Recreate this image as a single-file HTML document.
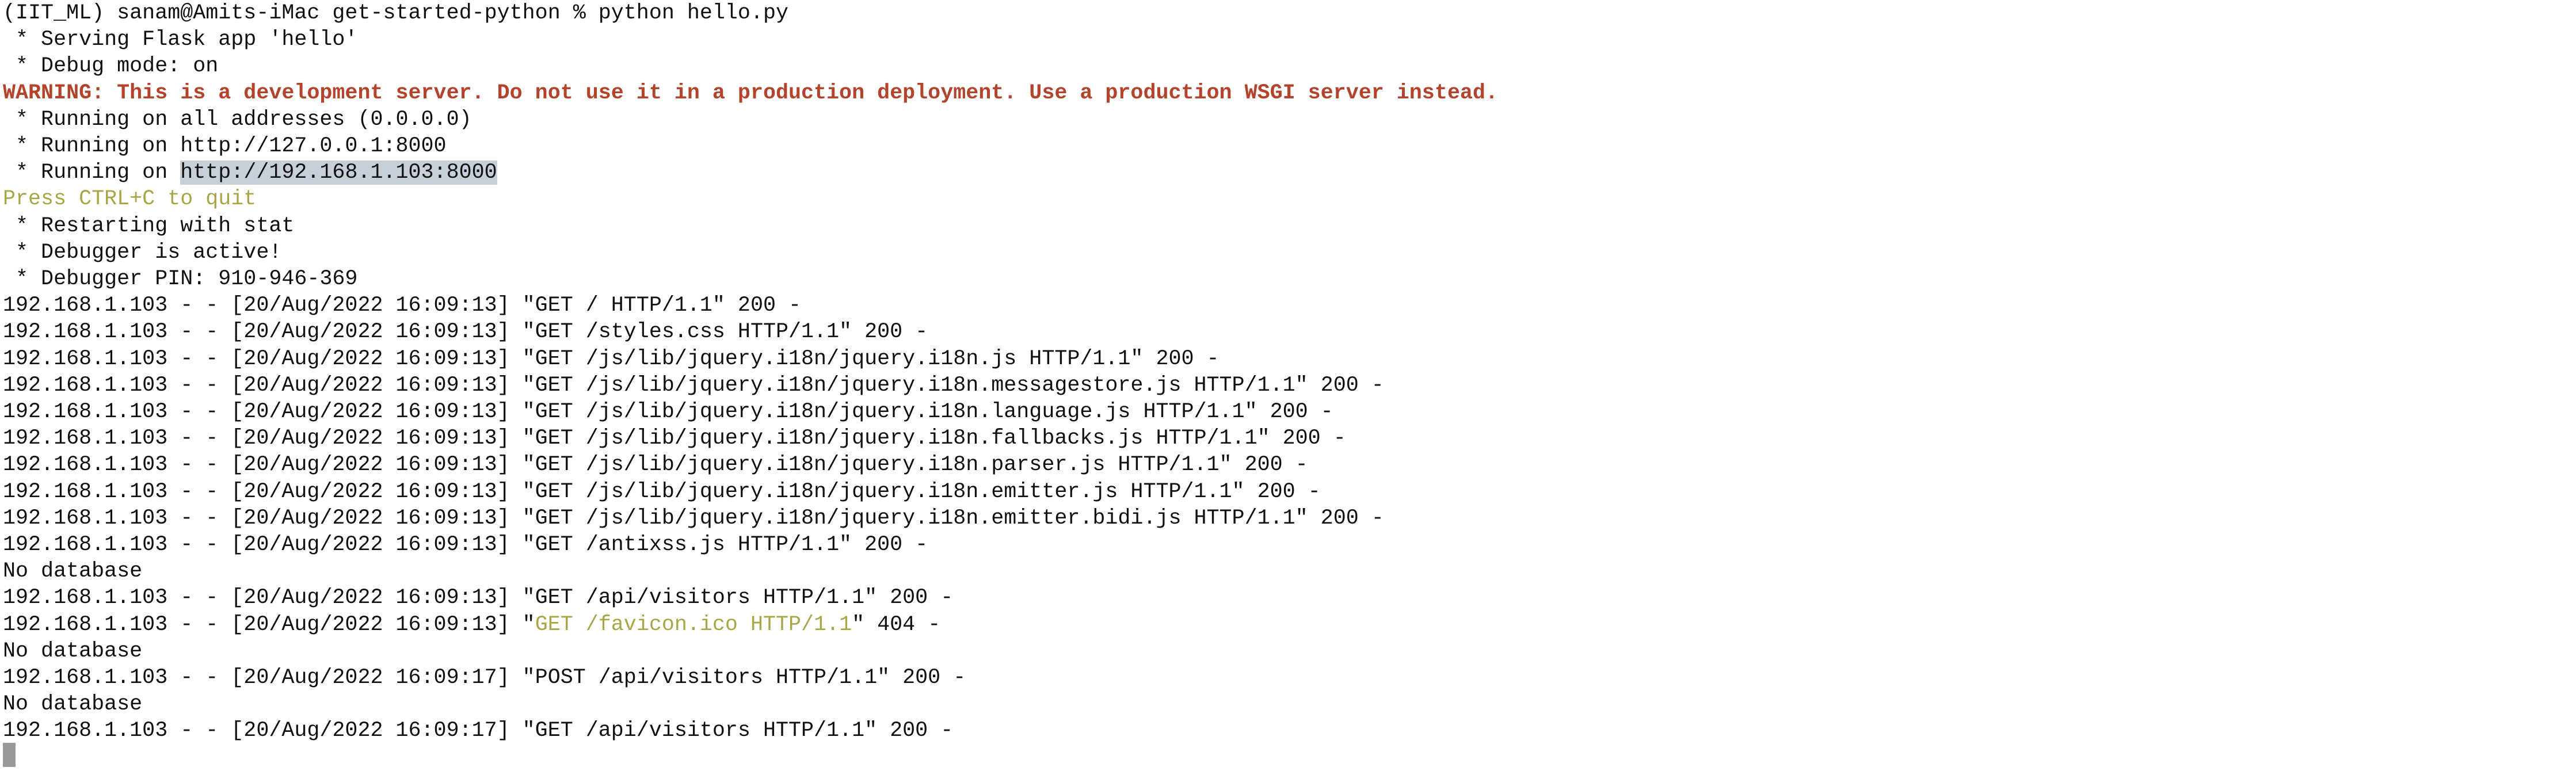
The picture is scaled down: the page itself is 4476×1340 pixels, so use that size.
<!DOCTYPE html>
<html><head><meta charset="utf-8"><style>
html,body{margin:0;padding:0;background:#fff;width:4476px;height:1340px;overflow:hidden}
pre{margin:0;position:absolute;left:5px;top:0px;font-family:"Liberation Mono",monospace;font-size:36.7px;line-height:46.2px;color:#111;white-space:pre}
.r{color:#b5432b;font-weight:bold}
.y{color:#a8a645}
.h{background:#c7d0d9}
.cur{position:absolute;left:5px;top:1291px;width:22px;height:42px;background:#999}
</style></head><body>
<pre>(IIT_ML) sanam@Amits-iMac get-started-python % python hello.py
 * Serving Flask app 'hello'
 * Debug mode: on
<span class="r">WARNING: This is a development server. Do not use it in a production deployment. Use a production WSGI server instead.</span>
 * Running on all addresses (0.0.0.0)
 * Running on http://127.0.0.1:8000
 * Running on <span class="h">http://192.168.1.103:8000</span>
<span class="y">Press CTRL+C to quit</span>
 * Restarting with stat
 * Debugger is active!
 * Debugger PIN: 910-946-369
192.168.1.103 - - [20/Aug/2022 16:09:13] "GET / HTTP/1.1" 200 -
192.168.1.103 - - [20/Aug/2022 16:09:13] "GET /styles.css HTTP/1.1" 200 -
192.168.1.103 - - [20/Aug/2022 16:09:13] "GET /js/lib/jquery.i18n/jquery.i18n.js HTTP/1.1" 200 -
192.168.1.103 - - [20/Aug/2022 16:09:13] "GET /js/lib/jquery.i18n/jquery.i18n.messagestore.js HTTP/1.1" 200 -
192.168.1.103 - - [20/Aug/2022 16:09:13] "GET /js/lib/jquery.i18n/jquery.i18n.language.js HTTP/1.1" 200 -
192.168.1.103 - - [20/Aug/2022 16:09:13] "GET /js/lib/jquery.i18n/jquery.i18n.fallbacks.js HTTP/1.1" 200 -
192.168.1.103 - - [20/Aug/2022 16:09:13] "GET /js/lib/jquery.i18n/jquery.i18n.parser.js HTTP/1.1" 200 -
192.168.1.103 - - [20/Aug/2022 16:09:13] "GET /js/lib/jquery.i18n/jquery.i18n.emitter.js HTTP/1.1" 200 -
192.168.1.103 - - [20/Aug/2022 16:09:13] "GET /js/lib/jquery.i18n/jquery.i18n.emitter.bidi.js HTTP/1.1" 200 -
192.168.1.103 - - [20/Aug/2022 16:09:13] "GET /antixss.js HTTP/1.1" 200 -
No database
192.168.1.103 - - [20/Aug/2022 16:09:13] "GET /api/visitors HTTP/1.1" 200 -
192.168.1.103 - - [20/Aug/2022 16:09:13] "<span class="y">GET /favicon.ico HTTP/1.1</span>" 404 -
No database
192.168.1.103 - - [20/Aug/2022 16:09:17] "POST /api/visitors HTTP/1.1" 200 -
No database
192.168.1.103 - - [20/Aug/2022 16:09:17] "GET /api/visitors HTTP/1.1" 200 -
</pre>
<div class="cur"></div>
</body></html>
